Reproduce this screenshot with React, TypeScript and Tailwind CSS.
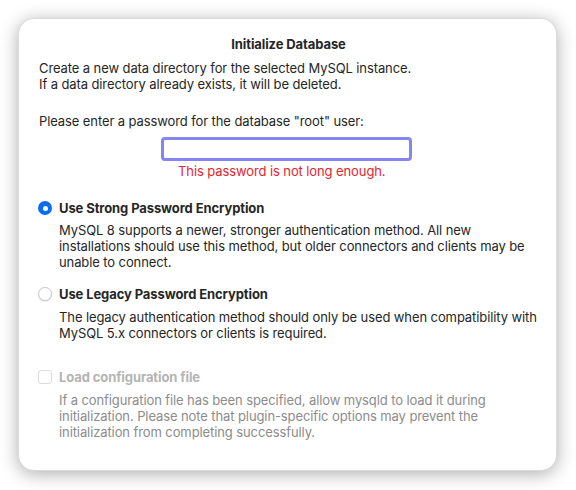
import React from "react";

export default function App() {
  const font = { fontFamily: "Inter, 'Noto Sans', sans-serif" };
  return (
    <div className="w-[576px] h-[490px] bg-white pt-[18px] pl-[18px]" style={font}>
      <div className="w-[539px] h-[453px] rounded-[16px] bg-white shadow-[0_3px_18px_rgba(0,0,0,0.32)] border border-[rgba(0,0,0,0.14)] text-[13px] leading-[16px] tracking-[-0.1px] text-[#262626] flex flex-col pl-[20px] pr-[18px]">
        <div className="pt-[17px] text-center font-bold text-[13px]">Initialize Database</div>
        <div className="mt-[8px]">
          <div>Create a new data directory for the selected MySQL instance.</div>
          <div>If a data directory already exists, it will be deleted.</div>
        </div>
        <div className="mt-[21px]">Please enter a password for the database "root" user:</div>
        <div className="flex flex-col items-start mt-[8px]">
          <div className="ml-[122px] w-[251px] h-[24px] rounded-[4px] border-[3px] border-[#8585f0] bg-white" />
          <div className="ml-[139px] mt-[2px] text-[#e8242c]">This password is not long enough.</div>
        </div>
        <div className="mt-[21px] flex items-center gap-[7px]">
          <div className="w-[14px] h-[14px] rounded-full bg-[#0a6cf5] flex items-center justify-center -ml-[1px]">
            <div className="w-[5px] h-[5px] rounded-full bg-white" />
          </div>
          <span className="font-bold">Use Strong Password Encryption</span>
        </div>
        <div className="mt-[6px] pl-[20px]">
          MySQL 8 supports a newer, stronger authentication method. All new installations should use this method, but older connectors and clients may be unable to connect.
        </div>
        <div className="mt-[16px] flex items-center gap-[7px]">
          <div className="w-[14px] h-[14px] rounded-full bg-white border border-[#c8c8c8] shadow-[0_0.5px_1px_rgba(0,0,0,0.15)] -ml-[1px]" />
          <span className="font-bold">Use Legacy Password Encryption</span>
        </div>
        <div className="mt-[7px] pl-[20px]">
          The legacy authentication method should only be used when compatibility with MySQL 5.x connectors or clients is required.
        </div>
        <div className="mt-[28px] flex items-center gap-[7px]">
          <div className="w-[14px] h-[14px] rounded-[3px] bg-white border border-[#dcdcdc] -ml-[1px]" />
          <span className="font-bold text-[#b4b4b4]">Load configuration file</span>
        </div>
        <div className="mt-[7px] pl-[20px] text-[#8c8c8c]">
          If a configuration file has been specified, allow mysqld to load it during initialization. Please note that plugin-specific options may prevent the initialization from completing successfully.
        </div>
      </div>
    </div>
  );
}
